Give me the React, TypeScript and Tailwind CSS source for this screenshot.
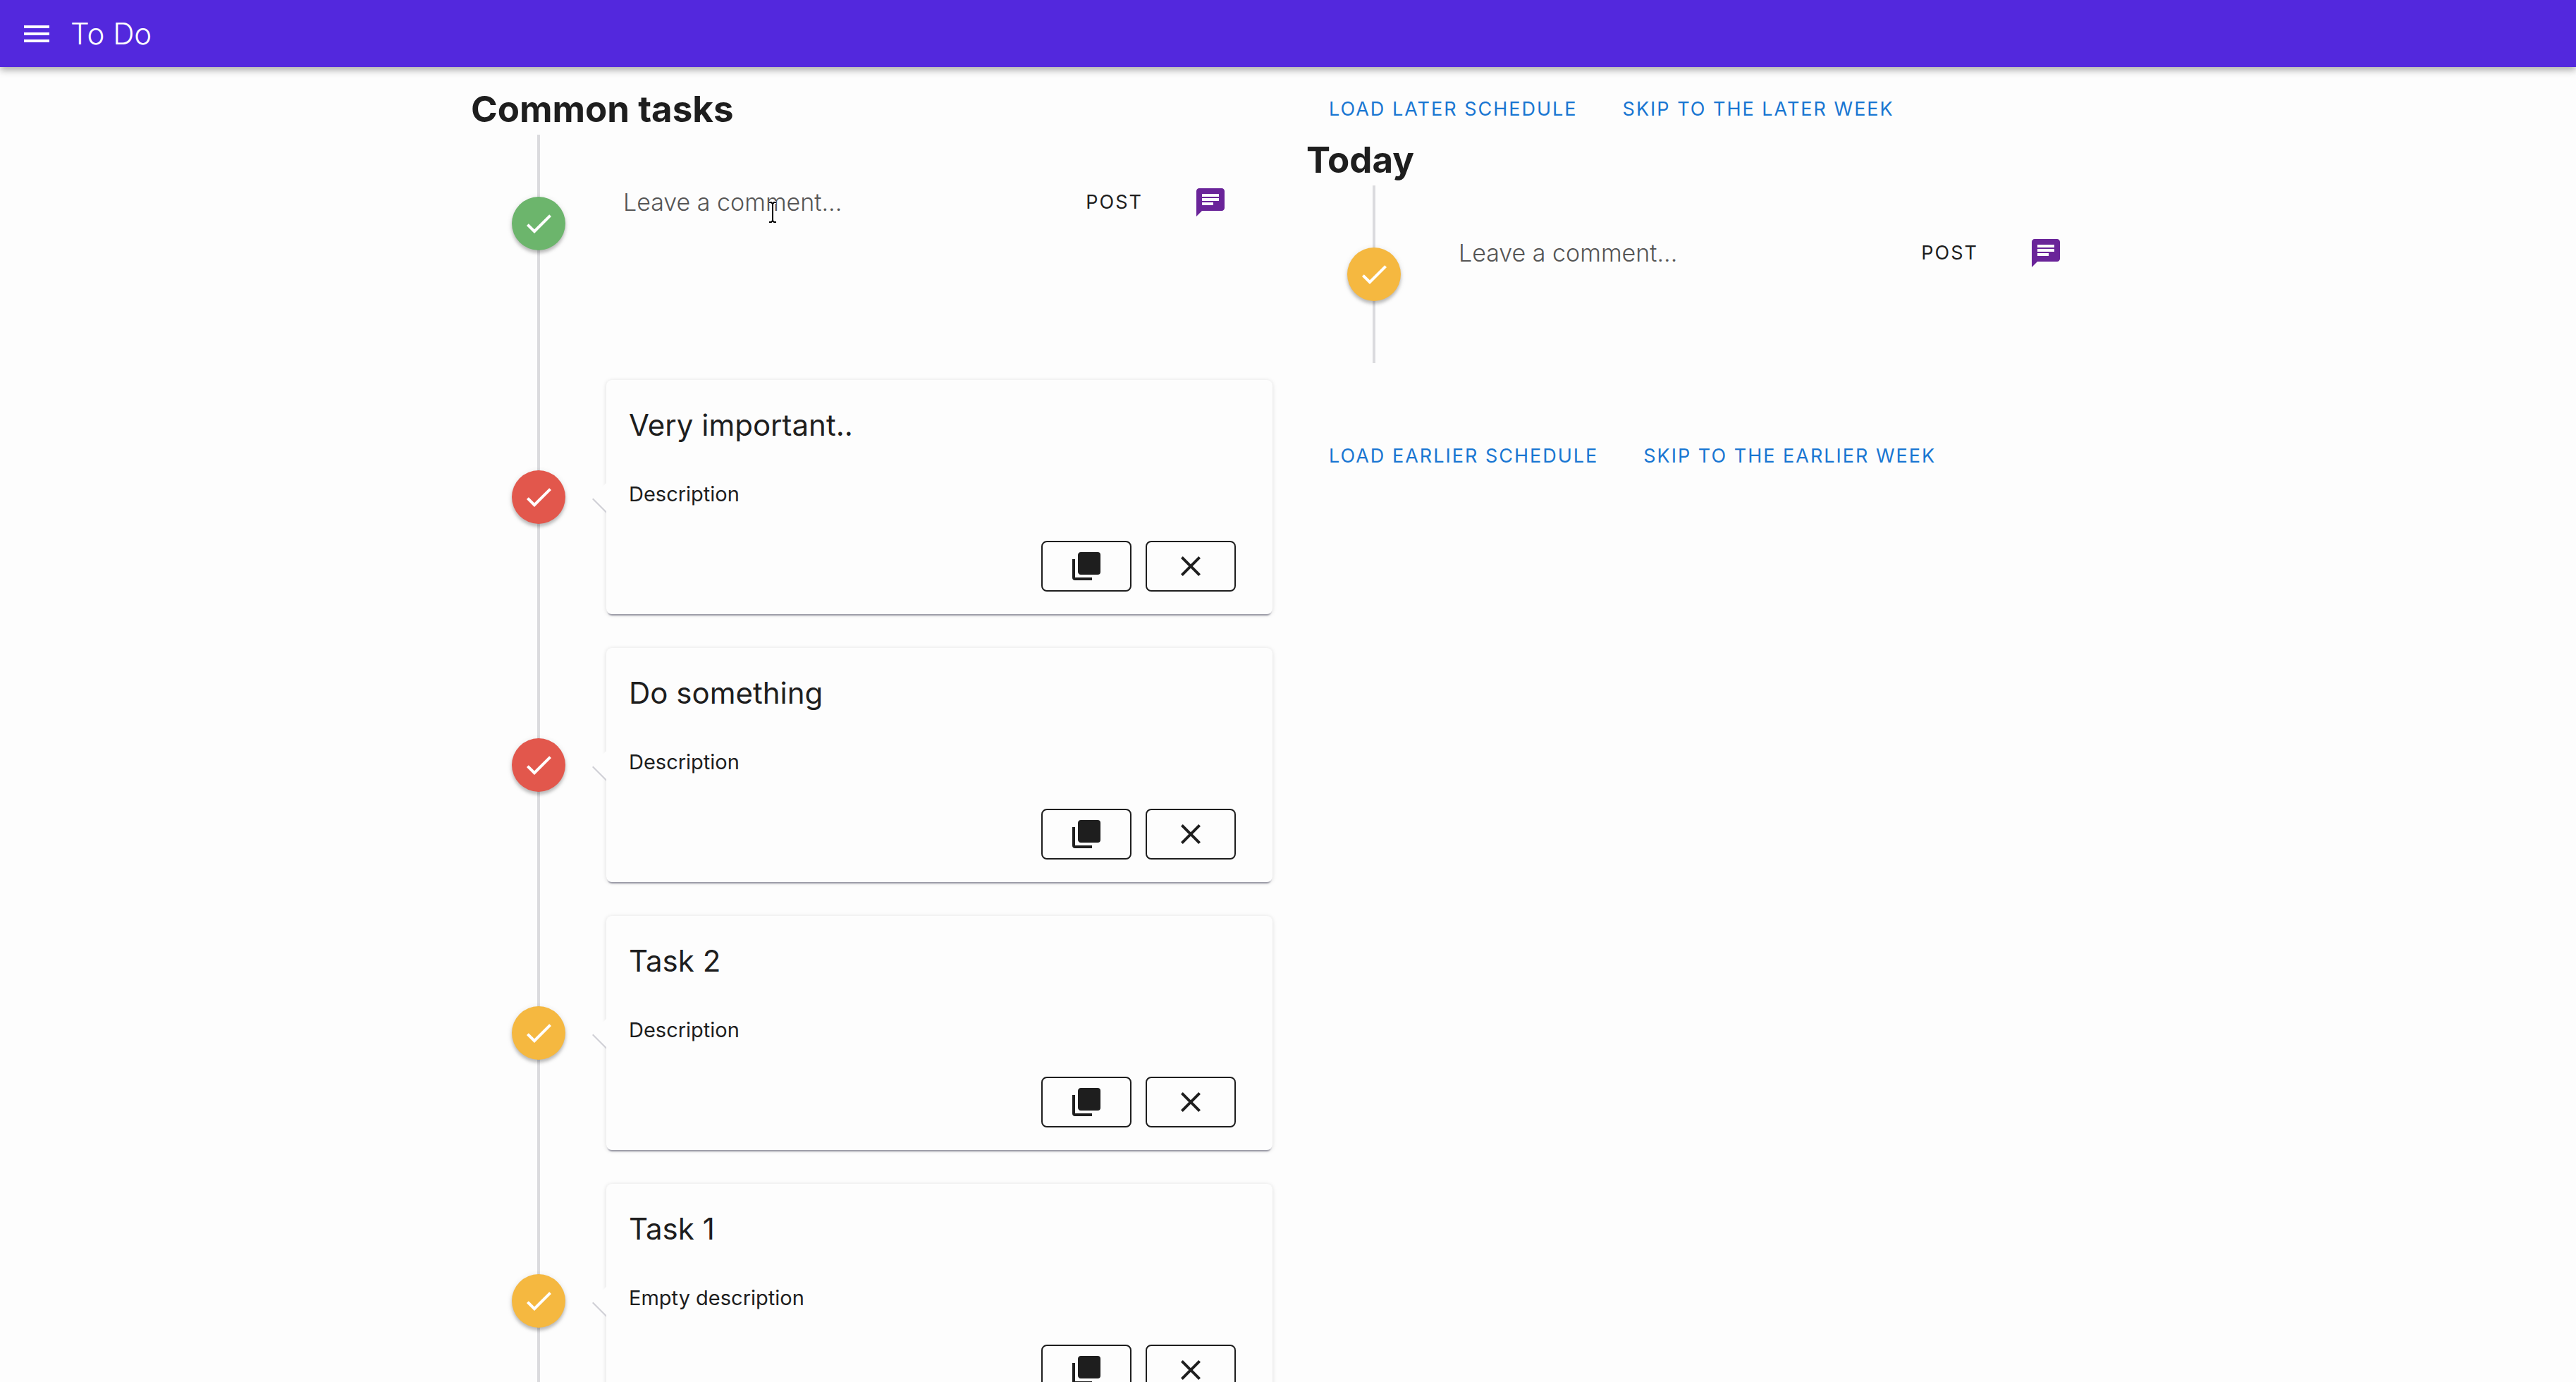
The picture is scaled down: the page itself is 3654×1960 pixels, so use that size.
const ICONS = {
  menu: 'M3,6H21V8H3V6M3,11H21V13H3V11M3,16H21V18H3V16Z',
  check: 'M21,7L9,19L3.5,13.5L4.91,12.09L9,16.17L19.59,5.59L21,7Z',
  close:
    'M19,6.41L17.59,5L12,10.59L6.41,5L5,6.41L10.59,12L5,17.59L6.41,19L12,13.41L17.59,19L19,17.59L13.41,12L19,6.41Z',
  copies:
    'M22,16A2,2 0 0,1 20,18H8C6.89,18 6,17.1 6,16V4C6,2.89 6.89,2 8,2H20A2,2 0 0,1 22,4V16M16,20V22H4A2,2 0 0,1 2,20V7H4V20H16Z',
  message:
    'M20,2H4C2.9,2 2,2.9 2,4V22L6,18H20C21.1,18 22,17.1 22,16V4C22,2.9 21.1,2 20,2M6,9H18V11H6V9M14,14H6V12H14V14M18,8H6V6H18V8Z',
};

function Icon({ name }: { name: keyof typeof ICONS }) {
  return (
    <svg viewBox="0 0 24 24" className="size-12 shrink-0" fill="currentColor" aria-hidden="true">
      <path d={ICONS[name]} />
    </svg>
  );
}

type Tone = 'green' | 'red' | 'amber';

const TONES: Record<Tone, string> = {
  green: 'bg-[#6cb56c]',
  red: 'bg-[#e2574c]',
  amber: 'bg-[#f5b840]',
};

function Dot({ tone, label }: { tone: Tone; label: string }) {
  return (
    <div className="flex w-48 shrink-0 items-center justify-center">
      <button
        type="button"
        aria-label={label}
        className={`relative flex size-[76px] items-center justify-center rounded-full text-white shadow-[0_4px_4px_rgba(0,0,0,0.2),0_2px_8px_rgba(0,0,0,0.12)] ${TONES[tone]}`}
      >
        <Icon name="check" />
      </button>
    </div>
  );
}

function Timeline({ children }: { children: React.ReactNode }) {
  return (
    <div className="relative pt-12">
      <div className="absolute inset-y-0 left-[94px] w-1 bg-[#dbdbde]" />
      {children}
    </div>
  );
}

function CommentItem({ tone }: { tone: Tone }) {
  return (
    <div className="flex pb-12">
      <Dot tone={tone} label="Complete" />
      <div className="h-[156px] min-w-0 flex-1">
        <form className="flex h-24 items-center pr-9 pl-6" onSubmit={(e) => e.preventDefault()}>
          <input
            type="text"
            aria-label="Leave a comment"
            placeholder="Leave a comment..."
            className="min-w-0 flex-1 bg-transparent text-[34px] leading-12 font-light text-[#1e1e1e] outline-none placeholder:text-[#555555]"
          />
          <button type="submit" className="mr-3 h-[72px] px-8 text-[27px] tracking-[2px]">
            POST
          </button>
          <button type="button" aria-label="Comments" className="px-7 text-[#6a2499]">
            <Icon name="message" />
          </button>
        </form>
      </div>
    </div>
  );
}

function OutlinedButton({ icon, label }: { icon: 'copies' | 'close'; label: string }) {
  return (
    <button
      type="button"
      aria-label={label}
      className="flex h-[72px] w-32 items-center justify-center rounded-lg border-2 border-[#1e1e1e]"
    >
      <Icon name={icon} />
    </button>
  );
}

function TaskItem({ tone, title, description }: { tone: Tone; title: string; description: string }) {
  return (
    <div className="flex pb-12">
      <Dot tone={tone} label={`Complete ${title}`} />
      <article className="relative min-w-0 flex-1 rounded-lg bg-[#fdfdfd] p-8 shadow-[0_4px_2px_-2px_rgba(30,30,60,0.4),0_1px_6px_rgba(0,0,0,0.14)]">
        <svg
          viewBox="0 0 22 46"
          className="absolute top-1/2 -left-5 -mt-5 h-[46px] w-[22px]"
          aria-hidden="true"
        >
          <polygon points="0,23 20,3 20,43" fill="#d0d0d6" />
          <polygon points="0,20 20,0 22,0 22,40 20,40" fill="#fdfdfd" />
        </svg>
        <h2 className="text-[42px] leading-16">{title}</h2>
        <p className="mt-11 text-[29px] leading-11">{description}</p>
        <div className="mt-11 mr-5 flex justify-end gap-5">
          <OutlinedButton icon="copies" label={`Duplicate ${title}`} />
          <OutlinedButton icon="close" label={`Remove ${title}`} />
        </div>
      </article>
    </div>
  );
}

function LinkButton({ children }: { children: string }) {
  return (
    <button type="button" className="h-[72px] px-8 text-[27px] tracking-[2px] text-[#1976d2]">
      {children}
    </button>
  );
}

const TASKS: { tone: Tone; title: string; description: string }[] = [
  { tone: 'red', title: 'Very important..', description: 'Description' },
  { tone: 'red', title: 'Do something', description: 'Description' },
  { tone: 'amber', title: 'Task 2', description: 'Description' },
  { tone: 'amber', title: 'Task 1', description: 'Empty description' },
];

function TextCursor() {
  return (
    <svg
      viewBox="0 0 14 32"
      className="pointer-events-none absolute top-[94px] left-[421px] h-8 w-3.5"
      fill="none"
      aria-hidden="true"
    >
      <path d="M2,2H5L7,4L9,2H12M7,4V28M2,30H5L7,28L9,30H12" stroke="#ffffff" strokeWidth="4" />
      <path d="M2,2H5L7,4L9,2H12M7,4V28M2,30H5L7,28L9,30H12" stroke="#000000" strokeWidth="2" />
    </svg>
  );
}

export default function App() {
  return (
    <div className="h-screen overflow-hidden bg-[#fdfdfd] font-[Inter,sans-serif] text-[#1e1e1e]">
      <header className="relative flex h-[95px] items-center gap-6 bg-[#5328dd] px-7 text-white shadow-[0_4px_10px_rgba(0,0,0,0.35)]">
        <button type="button" aria-label="Open menu">
          <Icon name="menu" />
        </button>
        <h1 className="text-[42px] font-light">To Do</h1>
      </header>
      <main className="mx-auto grid max-w-[2326px] grid-cols-2 gap-12 pt-6 pl-1">
        <section>
          <h2 className="text-[51px] leading-[72px] font-bold">Common tasks</h2>
          <div className="relative">
            <Timeline>
              <CommentItem tone="green" />
              <div className="pt-24">
                {TASKS.map((task) => (
                  <TaskItem key={task.title} {...task} />
                ))}
              </div>
            </Timeline>
            <TextCursor />
          </div>
        </section>
        <section>
          <div className="flex">
            <LinkButton>LOAD LATER SCHEDULE</LinkButton>
            <LinkButton>SKIP TO THE LATER WEEK</LinkButton>
          </div>
          <h2 className="text-[51px] leading-[72px] font-bold">Today</h2>
          <Timeline>
            <CommentItem tone="amber" />
          </Timeline>
          <div className="flex pt-24">
            <LinkButton>LOAD EARLIER SCHEDULE</LinkButton>
            <LinkButton>SKIP TO THE EARLIER WEEK</LinkButton>
          </div>
        </section>
      </main>
    </div>
  );
}
